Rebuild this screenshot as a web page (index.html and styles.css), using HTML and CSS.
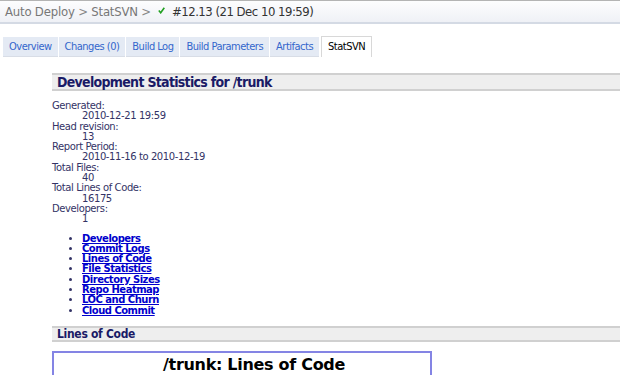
FILE: index.html
```html
<!DOCTYPE html>
<html lang="en">
<head>
    <meta charset="UTF-8">
    <title>StatSVN - Auto Deploy #12.13</title>
    <link rel="stylesheet" href="styles.css">
</head>
<body>

    <!-- Build header -->
    <div class="header">
        <a href="#" class="crumb">Auto Deploy</a>
        <span class="sep">&gt;</span>
        <a href="#" class="crumb">StatSVN</a>
        <span class="sep">&gt;</span>
        <svg class="check" width="7" height="7" viewBox="0 0 7 7">
            <path d="M0.8 3.6 L2.7 5.8 L6.3 0.8" fill="none" stroke="#22a022" stroke-width="1.6"/>
        </svg>
        <span class="build">#12.13 (21 Dec 10 19:59)</span>
    </div>

    <!-- Tabs -->
    <ul class="tabs">
        <li><a href="#">Overview</a></li>
        <li><a href="#">Changes (0)</a></li>
        <li><a href="#">Build Log</a></li>
        <li><a href="#">Build Parameters</a></li>
        <li><a href="#">Artifacts</a></li>
        <li class="selected"><a href="#">StatSVN</a></li>
    </ul>

    <!-- Report -->
    <div class="report">
        <h1>Development Statistics for /trunk</h1>

        <dl class="summary">
            <dt>Generated:</dt>
            <dd>2010-12-21 19:59</dd>
            <dt>Head revision:</dt>
            <dd>13</dd>
            <dt>Report Period:</dt>
            <dd>2010-11-16 to 2010-12-19</dd>
            <dt>Total Files:</dt>
            <dd>40</dd>
            <dt>Total Lines of Code:</dt>
            <dd>16175</dd>
            <dt>Developers:</dt>
            <dd>1</dd>
        </dl>

        <ul class="nav">
            <li><a href="#">Developers</a></li>
            <li><a href="#">Commit Logs</a></li>
            <li><a href="#">Lines of Code</a></li>
            <li><a href="#">File Statistics</a></li>
            <li><a href="#">Directory Sizes</a></li>
            <li><a href="#">Repo Heatmap</a></li>
            <li><a href="#">LOC and Churn</a></li>
            <li><a href="#">Cloud Commit</a></li>
        </ul>

        <h2>Lines of Code</h2>

        <div class="chart">
            <div class="chart-title">/trunk: Lines of Code</div>
        </div>
    </div>

</body>
</html>
```

FILE: styles.css
```css
/* Global */
body {
    margin: 0;
    font-family: 'DejaVu Sans', Verdana, sans-serif;
    background: #fff;
    overflow: hidden;
}

/* Header */
.header {
    height: 19px;
    padding: 2px 0 0 5px;
    border-top: 1px solid #b4b4b4;
    border-bottom: 2px solid #d4dae4;
    background: linear-gradient(#fdfdfe, #eff1f6);
    font-family: 'DejaVu Sans Condensed', 'DejaVu Sans', sans-serif;
    font-size: 13px;
    line-height: 18px;
    letter-spacing: -0.2px;
    color: #333;
    white-space: nowrap;
}

.header .crumb {
    color: #777;
    text-decoration: none;
}

.header .sep {
    color: #888;
}

.header .check {
    margin: 0 3px 0 4px;
    vertical-align: 2px;
}

.header .build {
    letter-spacing: -0.5px;
}

/* Tabs */
.tabs {
    list-style: none;
    margin: 13px 0 0 3px;
    padding: 0;
    display: flex;
    gap: 1px;
}

.tabs li {
    background: #e4eaf4;
    border-bottom: 1px solid #d8dde6;
}

.tabs a {
    display: block;
    padding: 4px 6px 3px;
    font-family: 'DejaVu Sans Condensed', 'DejaVu Sans', sans-serif;
    font-size: 11px;
    line-height: 12px;
    letter-spacing: -0.5px;
    color: #3366cc;
    text-decoration: none;
}

.tabs li.selected {
    background: #fff;
    border: 1px solid #d8d8d8;
    border-bottom: none;
    margin: -1px 0 0 1px;
}

.tabs li.selected a {
    color: #000;
}

/* Report */
.report {
    margin: 16px 0 0 52px;
    color: #333366;
    font-size: 10px;
    letter-spacing: -0.4px;
    line-height: 10.3px;
}

.report h1,
.report h2 {
    margin: 0;
    background: #eee;
    border-top: 2px solid #d0d0d0;
    border-bottom: 2px solid #d0d0d0;
    color: #1a1a66;
    font-family: 'DejaVu Sans Condensed', 'DejaVu Sans', sans-serif;
    font-weight: bold;
    letter-spacing: -0.3px;
}

.report h1 {
    font-size: 14px;
    line-height: 14px;
    letter-spacing: -0.7px;
    padding: 0 5px;
}

.report h2 {
    font-size: 12px;
    line-height: 12px;
    padding: 0 5px;
    margin-top: 10px;
}

.summary {
    margin: 10px 0 0;
}

.summary dd {
    margin-left: 30px;
}

.nav {
    margin: 9px 0 0;
    padding-left: 30px;
}

.nav a {
    color: #0000cc;
    font-weight: bold;
    letter-spacing: -0.5px;
}

/* Chart */
.chart {
    width: 376px;
    height: 40px;
    margin-top: 9px;
    border: 2px solid #8484e4;
    border-bottom: none;
}

.chart-title {
    padding: 3px 0 0 109px;
    font-size: 16px;
    line-height: 17px;
    font-weight: bold;
    color: #000;
    letter-spacing: -0.3px;
}
```
